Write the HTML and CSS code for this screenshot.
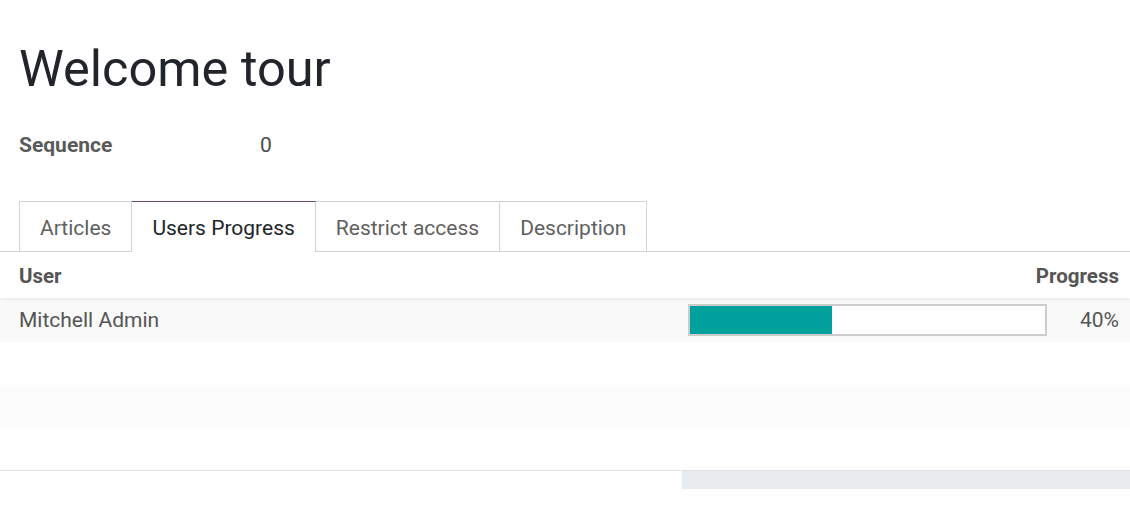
FILE: index.html
```html
<!DOCTYPE html>
<html>
<head>
<meta charset="utf-8">
<link rel="stylesheet" href="styles.css">
</head>
<body>
<div class="sheet">
  <h1 class="title">Welcome tour</h1>
  <div class="field">
    <span class="label">Sequence</span>
    <span class="value">0</span>
  </div>
  <div class="tabs">
    <div class="tab">Articles</div>
    <div class="tab active">Users Progress</div>
    <div class="tab">Restrict access</div>
    <div class="tab">Description</div>
  </div>
  <div class="table">
    <div class="thead">
      <div class="th">User</div>
      <div class="th right">Progress</div>
    </div>
    <div class="row filled">
      <div class="td">Mitchell Admin</div>
      <div class="td progress-cell">
        <div class="bar"><div class="fill" style="width:40%"></div></div>
        <span class="pct">40%</span>
      </div>
    </div>
    <div class="row"></div>
    <div class="row striped"></div>
    <div class="row"></div>
    <div class="tfoot">
      <div class="foot-left"></div>
      <div class="foot-right"></div>
    </div>
  </div>
</div>
</body>
</html>
```
FILE: styles.css
```css
html, body {
  margin: 0;
  padding: 0;
  background: #fff;
}
body {
  font-family: Roboto, "Noto Sans", sans-serif;
  color: #4c4c4c;
  width: 1130px;
  height: 531px;
  overflow: hidden;
}
.sheet {
  padding-top: 36px;
}
.title {
  margin: 0 0 0 19px;
  font-weight: 400;
  font-size: 50.5px;
  line-height: 66px;
  color: #212529;
}
.field {
  display: flex;
  align-items: center;
  margin: 28px 0 0 19px;
  height: 30px;
  font-size: 21px;
}
.label {
  font-weight: 700;
  width: 241px;
  color: #5a5a5a;
}
.value {
  color: #4c4c4c;
}
.tabs {
  display: flex;
  margin-top: 41px;
  padding-left: 19px;
  border-bottom: 1px solid #ced4da;
  height: 50px;
}
.tab {
  box-sizing: border-box;
  height: 51px;
  padding: 2px 20px 0;
  display: flex;
  align-items: center;
  font-size: 21px;
  color: #5f5f5f;
  border: 1px solid #ced4da;
  border-left: none;
  border-bottom: none;
}
.tab:first-child {
  border-left: 1px solid #ced4da;
}
.tab.active {
  color: #212529;
  border-top: 1px solid #714b67;
  background: #fff;
  position: relative;
  z-index: 1;
}
.table {
  display: flex;
  flex-direction: column;
}
.thead {
  box-sizing: border-box;
  display: flex;
  justify-content: space-between;
  align-items: center;
  height: 46px;
  padding: 2px 11px 0 19px;
  font-weight: 700;
  font-size: 20.5px;
  color: #555;
  position: relative;
  z-index: 1;
  box-shadow: 0 2px 4px rgba(0,0,0,0.06);
}
.row {
  height: 43px;
}
.row.striped {
  height: 42px;
  background: #fcfcfc;
}
.row.filled {
  height: 44px;
  display: flex;
  align-items: center;
  justify-content: space-between;
  padding: 0 11px 0 19px;
  background: #f9f9f9;
  font-size: 21px;
  color: #555;
}
.progress-cell {
  display: flex;
  align-items: center;
}
.bar {
  box-sizing: border-box;
  width: 359px;
  height: 32px;
  border: 2px solid #ccc;
  background: #fff;
}
.fill {
  height: 100%;
  background: #00a09d;
}
.pct {
  width: 72px;
  text-align: right;
}
.tfoot {
  display: flex;
  border-top: 1px solid #dee2e6;
}
.foot-left {
  width: 682px;
}
.foot-right {
  flex: 1;
  height: 18px;
  background: #e9ecef;
}
```
